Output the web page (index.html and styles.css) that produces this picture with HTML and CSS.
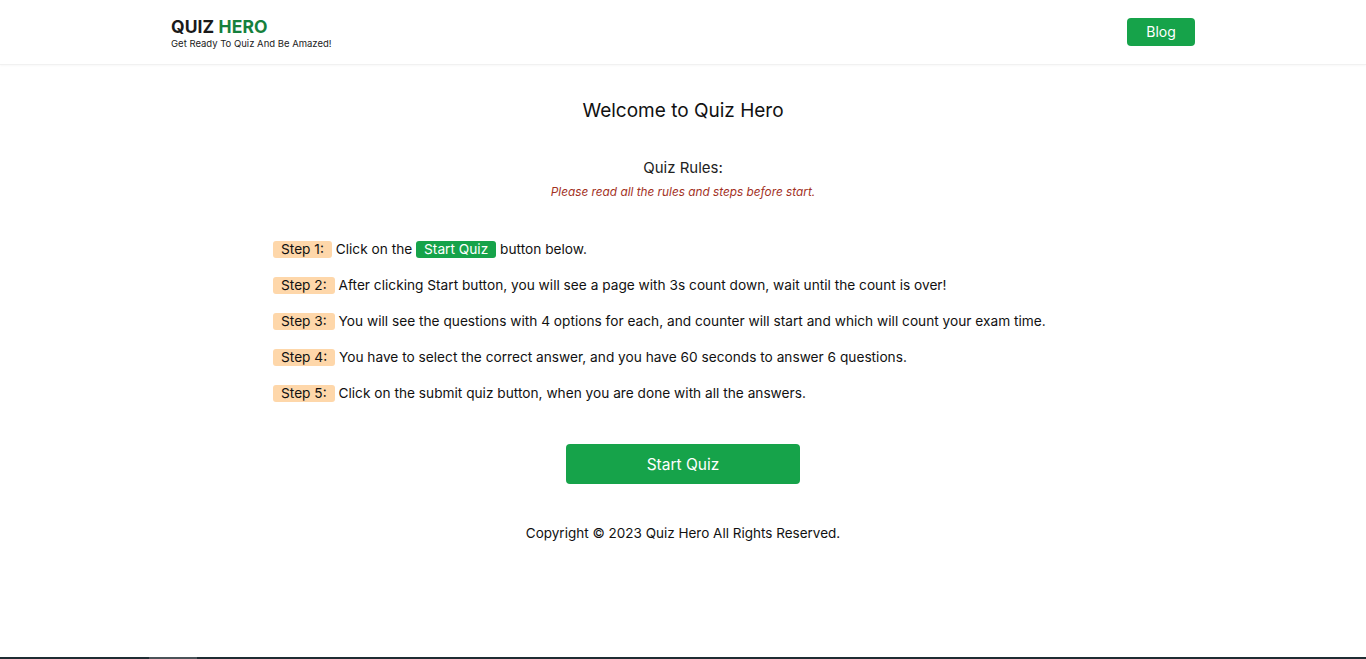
FILE: index.html
```html
<!DOCTYPE html>
<html lang="en">
<head>
<meta charset="utf-8">
<title>Quiz Hero</title>
<link rel="stylesheet" href="styles.css">
</head>
<body>
<div class="page">
  <header class="header">
    <div class="header-inner">
      <div class="brand">
        <div class="logo">QUIZ <span class="logo-accent">HERO</span></div>
        <div class="tagline">Get Ready To Quiz And Be Amazed!</div>
      </div>
      <a class="blog-btn" href="#">Blog</a>
    </div>
  </header>
  <main class="main">
    <h1 class="title">Welcome to Quiz Hero</h1>
    <h2 class="rules-title">Quiz Rules:</h2>
    <p class="rules-note">Please read all the rules and steps before start.</p>
    <ul class="steps">
      <li class="step"><span class="step-badge">Step 1:</span> Click on the <span class="inline-btn">Start Quiz</span> button below.</li>
      <li class="step"><span class="step-badge">Step 2:</span> After clicking Start button, you will see a page with 3s count down, wait until the count is over!</li>
      <li class="step"><span class="step-badge">Step 3:</span> You will see the questions with 4 options for each, and counter will start and which will count your exam time.</li>
      <li class="step"><span class="step-badge">Step 4:</span> You have to select the correct answer, and you have 60 seconds to answer 6 questions.</li>
      <li class="step"><span class="step-badge">Step 5:</span> Click on the submit quiz button, when you are done with all the answers.</li>
    </ul>
    <div class="start-wrap"><button class="start-btn">Start Quiz</button></div>
    <footer class="footer">Copyright © 2023 Quiz Hero All Rights Reserved.</footer>
  </main>
  <div class="bottom-bar"><span class="bottom-thumb"></span></div>
</div>
</body>
</html>
```
FILE: styles.css
```css
* { box-sizing: border-box; }
html, body { margin: 0; padding: 0; }
body {
  font-family: Inter, "Noto Sans", sans-serif;
  color: #111;
  background: #fff;
}
.page {
  min-height: 100vh;
  display: flex;
  flex-direction: column;
}
.header {
  height: 65px;
  border-bottom: 1px solid #f1f1f1;
  box-shadow: 0 1px 2px rgba(0,0,0,0.03);
}
.header-inner {
  max-width: 1024px;
  margin: 0 auto;
  display: flex;
  justify-content: space-between;
  align-items: flex-start;
  padding-top: 17px;
}
.logo {
  font-size: 17.5px;
  font-weight: 700;
  line-height: 20px;
  color: #1a1a1a;
  letter-spacing: 0.1px;
}
.logo-accent { color: #15803d; }
.tagline {
  font-size: 9.5px;
  line-height: 14px;
  color: #222;
  margin-top: 0;
}
.blog-btn {
  margin-top: 1px;
  display: block;
  width: 68px;
  height: 28px;
  line-height: 28px;
  text-align: center;
  background: #16a34a;
  color: #fff;
  border-radius: 4px;
  font-size: 14px;
  text-decoration: none;
}
.main {
  max-width: 820px;
  width: 100%;
  margin: 0 auto;
  flex: 1;
}
.title {
  margin: 34px 0 0;
  text-align: center;
  font-size: 19px;
  font-weight: 400;
  line-height: 24px;
}
.rules-title {
  margin: 35px 0 0;
  text-align: center;
  font-size: 15px;
  font-weight: 400;
  line-height: 20px;
  color: #222;
}
.rules-note {
  margin: 6px 0 0;
  text-align: center;
  font-size: 11.8px;
  font-style: italic;
  line-height: 16px;
  color: #a3321f;
}
.steps {
  list-style: none;
  margin: 40px 0 0;
  padding: 0;
  display: flex;
  flex-direction: column;
  gap: 18px;
}
.step {
  font-size: 13.7px;
  line-height: 18px;
  color: #111;
}
.step-badge {
  display: inline-block;
  background: #fed7aa;
  border-radius: 3px;
  padding: 0 8px;
  line-height: 17px;
}
.inline-btn {
  display: inline-block;
  background: #16a34a;
  color: #fff;
  border-radius: 3px;
  padding: 0 8px;
  line-height: 17px;
}
.start-wrap {
  display: flex;
  justify-content: center;
  margin-top: 42px;
}
.start-btn {
  width: 234px;
  height: 40px;
  background: #16a34a;
  color: #fff;
  border: 0;
  border-radius: 4px;
  font-family: inherit;
  font-size: 15.5px;
}
.footer {
  margin-top: 40px;
  text-align: center;
  font-size: 13.5px;
  line-height: 18px;
  color: #111;
}
.bottom-bar {
  height: 2px;
  background: #1f2d33;
}
.bottom-thumb {
  display: block;
  width: 48px;
  height: 2px;
  margin-left: 149px;
  background: #4b5459;
}
```
